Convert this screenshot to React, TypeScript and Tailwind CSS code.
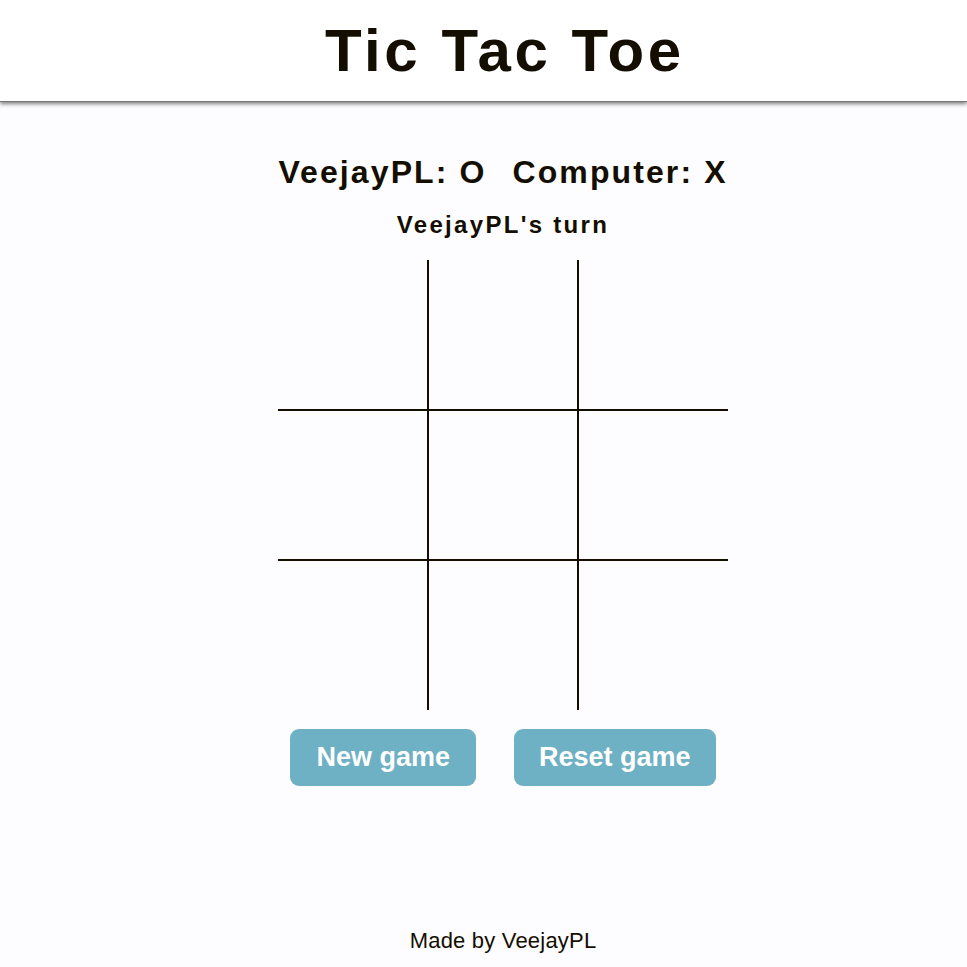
export default function App() {
  const cells = Array.from({ length: 9 }, (_, i) => i);

  return (
    <div className="min-h-screen flex flex-col bg-[#fdfcfe] text-[#130e00] font-['Liberation_Sans',Arial,sans-serif]">
      {/* Header */}
      <header className="h-[102px] bg-white flex items-center justify-center pl-[39px] shadow-[0_2px_4px_rgba(0,0,0,0.5)] border-b border-[#777]">
        <h1 className="text-[60px] font-bold tracking-[3.6px] leading-none pl-[3.6px]">Tic Tac Toe</h1>
      </header>

      <main className="flex flex-col items-center pt-[50px] pl-[39px]">
        <div className="flex gap-[26px] text-[32px] font-bold tracking-[2.1px] leading-[40px]">
          <span>VeejayPL: O</span>
          <span>Computer: X</span>
        </div>
        <p className="mt-[19px] text-[24px] font-bold tracking-[2.3px] leading-[28px]">VeejayPL's turn</p>

        {/* Board */}
        <div className="mt-[21px] grid grid-cols-[151px_150px_149px] grid-rows-[151px_150px_149px]">
          {cells.map((i) => (
            <div
              key={i}
              className={[
                'border-[#130e00]',
                i % 3 !== 2 ? 'border-r-2' : '',
                i < 6 ? 'border-b-2' : '',
              ].join(' ')}
            />
          ))}
        </div>

        <div className="mt-[19px] flex gap-[38px]">
          <button className="h-[57px] px-[26px] rounded-[9px] bg-[#6eb0c4] text-white text-[27px] font-bold">
            New game
          </button>
          <button className="h-[57px] px-[25px] rounded-[9px] bg-[#6eb0c4] text-white text-[27px] font-bold">
            Reset game
          </button>
        </div>
      </main>

      <footer className="mt-auto pb-[10px] pl-[39px] text-center text-[22px] tracking-[0.2px]">Made by VeejayPL</footer>
    </div>
  );
}
